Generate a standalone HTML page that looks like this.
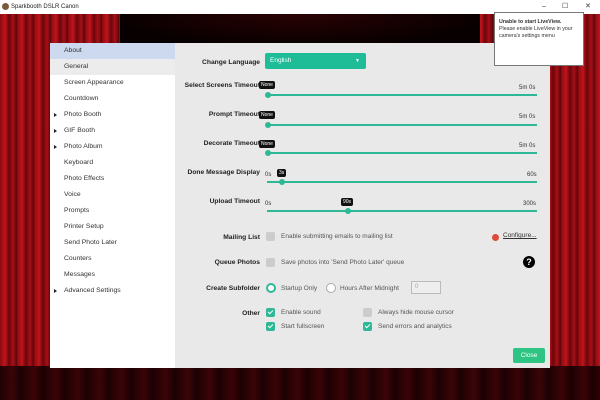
<!DOCTYPE html>
<html><head><style>
*{margin:0;padding:0;box-sizing:border-box}
body{width:600px;height:400px;overflow:hidden;font-family:"Liberation Sans",sans-serif;font-size:7px;color:#333;position:relative;
background:#1a0204}
.bg{position:absolute;left:0;top:14px;width:600px;height:386px;
background:repeating-linear-gradient(90deg,#8a0a10 0px,#c0141c 5px,#6a060a 9px,#a51018 13px,#5a0508 17px);}
.top{position:absolute;left:120px;top:14px;width:360px;height:30px;background:radial-gradient(ellipse at 50% 0%,#2a0204,#080000 75%)}
.floor{position:absolute;left:0;top:366px;width:600px;height:34px;background:repeating-linear-gradient(90deg,#200204 0,#3a0407 12px,#180103 22px);}
.title{position:absolute;left:0;top:0;width:600px;height:14px;background:#fff;font-size:6px;line-height:14px;padding-left:11px;color:#222}
.title .ic{position:absolute;left:2px;top:3px;width:7px;height:7px;border-radius:50%;background:#7a5a3a}
.wc{position:absolute;top:0;font-size:7px;color:#333}
.side{position:absolute;left:50px;top:43px;width:125px;height:325px;background:#fff}
.side div{height:16px;line-height:16px;padding-left:14px;font-size:6.8px;color:#333;position:relative}
.side .a{background:#cdd9ee}.side .g{background:#ececec}
.side .t:before{content:"";position:absolute;left:4px;top:6px;border-left:3px solid #222;border-top:2px solid transparent;border-bottom:2px solid transparent}
.main{position:absolute;left:175px;top:43px;width:375px;height:325px;background:#e9e9e9}
.lbl{position:absolute;right:340px;font-weight:bold;font-size:6.7px;color:#222;white-space:nowrap;text-align:right}
.trk{position:absolute;left:267px;width:270px;height:2px;background:#2fb896}
.kn{position:absolute;width:6px;height:6px;border-radius:50%;background:#2fb896;margin-left:-3px;margin-top:-2px}
.tip{position:absolute;background:#111;color:#fff;font-size:5px;padding:1px 2px;border-radius:2px;line-height:6px}
.sm{position:absolute;font-size:6px;color:#333}
.cb{position:absolute;width:9px;height:9px;border-radius:2px;background:#ccc}
.cb.on{background:#2fb896}
.cb.on:after{content:"";position:absolute;left:3px;top:1px;width:2px;height:4px;border:solid #fff;border-width:0 1.2px 1.2px 0;transform:rotate(45deg)}
.tx{position:absolute;font-size:6.5px;color:#555;white-space:nowrap}
</style></head><body>
<div class="bg"></div><div class="top"></div><div class="floor"></div>
<div class="title"><span class="ic"></span>Sparkbooth DSLR Canon
<span class="wc" style="left:542px">–</span><span class="wc" style="left:562px;top:0">☐</span><span class="wc" style="left:585px">✕</span></div>
<div class="side">
<div class="a">About</div><div class="g">General</div><div>Screen Appearance</div><div>Countdown</div><div class="t">Photo Booth</div><div class="t">GIF Booth</div><div class="t">Photo Album</div><div>Keyboard</div><div>Photo Effects</div><div>Voice</div><div>Prompts</div><div>Printer Setup</div><div>Send Photo Later</div><div>Counters</div><div>Messages</div><div class="t">Advanced Settings</div>
</div>
<div class="main"></div>
<div class="lbl" style="top:59px">Change Language</div>
<div style="position:absolute;left:265px;top:53px;width:101px;height:16px;background:#1fbc98;border-radius:2px;color:#fff;font-size:6.5px;line-height:16px;padding-left:5px">English<span style="position:absolute;right:6px;top:0;font-size:5px">▼</span></div>

<div class="lbl" style="top:82px">Select Screens Timeout</div>
<div class="tip" style="left:259px;top:81px">None</div><div class="sm" style="left:519px;top:85px">5m 0s</div>
<div class="trk" style="top:94px"></div><div class="kn" style="left:268px;top:94px"></div>

<div class="lbl" style="top:111px">Prompt Timeout</div>
<div class="tip" style="left:259px;top:111px">None</div><div class="sm" style="left:519px;top:114px">5m 0s</div>
<div class="trk" style="top:124px"></div><div class="kn" style="left:268px;top:124px"></div>

<div class="lbl" style="top:140px">Decorate Timeout</div>
<div class="tip" style="left:259px;top:140px">None</div><div class="sm" style="left:519px;top:143px">5m 0s</div>
<div class="trk" style="top:152px"></div><div class="kn" style="left:268px;top:152px"></div>

<div class="lbl" style="top:169px">Done Message Display</div>
<div class="sm" style="left:265px;top:172px">0s</div><div class="tip" style="left:277px;top:169px">3s</div><div class="sm" style="left:527px;top:172px">60s</div>
<div class="trk" style="top:181px"></div><div class="kn" style="left:282px;top:181px"></div>

<div class="lbl" style="top:198px">Upload Timeout</div>
<div class="sm" style="left:265px;top:201px">0s</div><div class="tip" style="left:341px;top:198px">90s</div><div class="sm" style="left:523px;top:201px">300s</div>
<div class="trk" style="top:210px"></div><div class="kn" style="left:348px;top:210px"></div>

<div class="lbl" style="top:234px">Mailing List</div>
<div class="cb" style="left:266px;top:232px"></div><div class="tx" style="left:281px;top:233px">Enable submitting emails to mailing list</div>
<div style="position:absolute;left:492px;top:234px;width:7px;height:7px;border-radius:50%;background:#e04a3a"></div>
<div class="tx" style="left:503px;top:232px;text-decoration:underline;color:#333">Configure...</div>

<div class="lbl" style="top:259px">Queue Photos</div>
<div class="cb" style="left:266px;top:258px"></div><div class="tx" style="left:281px;top:259px">Save photos into 'Send Photo Later' queue</div>
<div style="position:absolute;left:523px;top:256px;width:12px;height:12px;border-radius:50%;background:#000;color:#fff;font-weight:bold;font-size:9px;text-align:center;line-height:12px">?</div>

<div class="lbl" style="top:285px">Create Subfolder</div>
<div style="position:absolute;left:266px;top:283px;width:10px;height:10px;border-radius:50%;border:2.5px solid #2fb896;background:#fff"></div>
<div class="tx" style="left:281px;top:285px">Startup Only</div>
<div style="position:absolute;left:326px;top:283px;width:10px;height:10px;border-radius:50%;border:1px solid #aaa;background:#fff"></div>
<div class="tx" style="left:340px;top:285px">Hours After Midnight</div>
<div style="position:absolute;left:411px;top:281px;width:30px;height:13px;border:1px solid #bbb;background:#eee;font-size:6px;color:#aaa;padding-left:3px;line-height:11px">0</div>

<div class="lbl" style="top:310px">Other</div>
<div class="cb on" style="left:266px;top:308px"></div><div class="tx" style="left:281px;top:309px">Enable sound</div>
<div class="cb" style="left:363px;top:308px"></div><div class="tx" style="left:378px;top:309px">Always hide mouse cursor</div>
<div class="cb on" style="left:266px;top:322px"></div><div class="tx" style="left:281px;top:323px">Start fullscreen</div>
<div class="cb on" style="left:363px;top:322px"></div><div class="tx" style="left:378px;top:323px">Send errors and analytics</div>

<div style="position:absolute;left:513px;top:348px;width:32px;height:15px;background:#2ec584;border-radius:2px;color:#fff;font-size:6.5px;text-align:center;line-height:15px">Close</div>

<div style="position:absolute;left:494px;top:12px;width:90px;height:54px;background:#fff;border:1px solid #777;padding:6px 4px;font-size:5.3px;line-height:7px;color:#333"><b>Unable to start LiveView.</b> Please enable LiveView in your camera's settings menu</div>
</body></html>
